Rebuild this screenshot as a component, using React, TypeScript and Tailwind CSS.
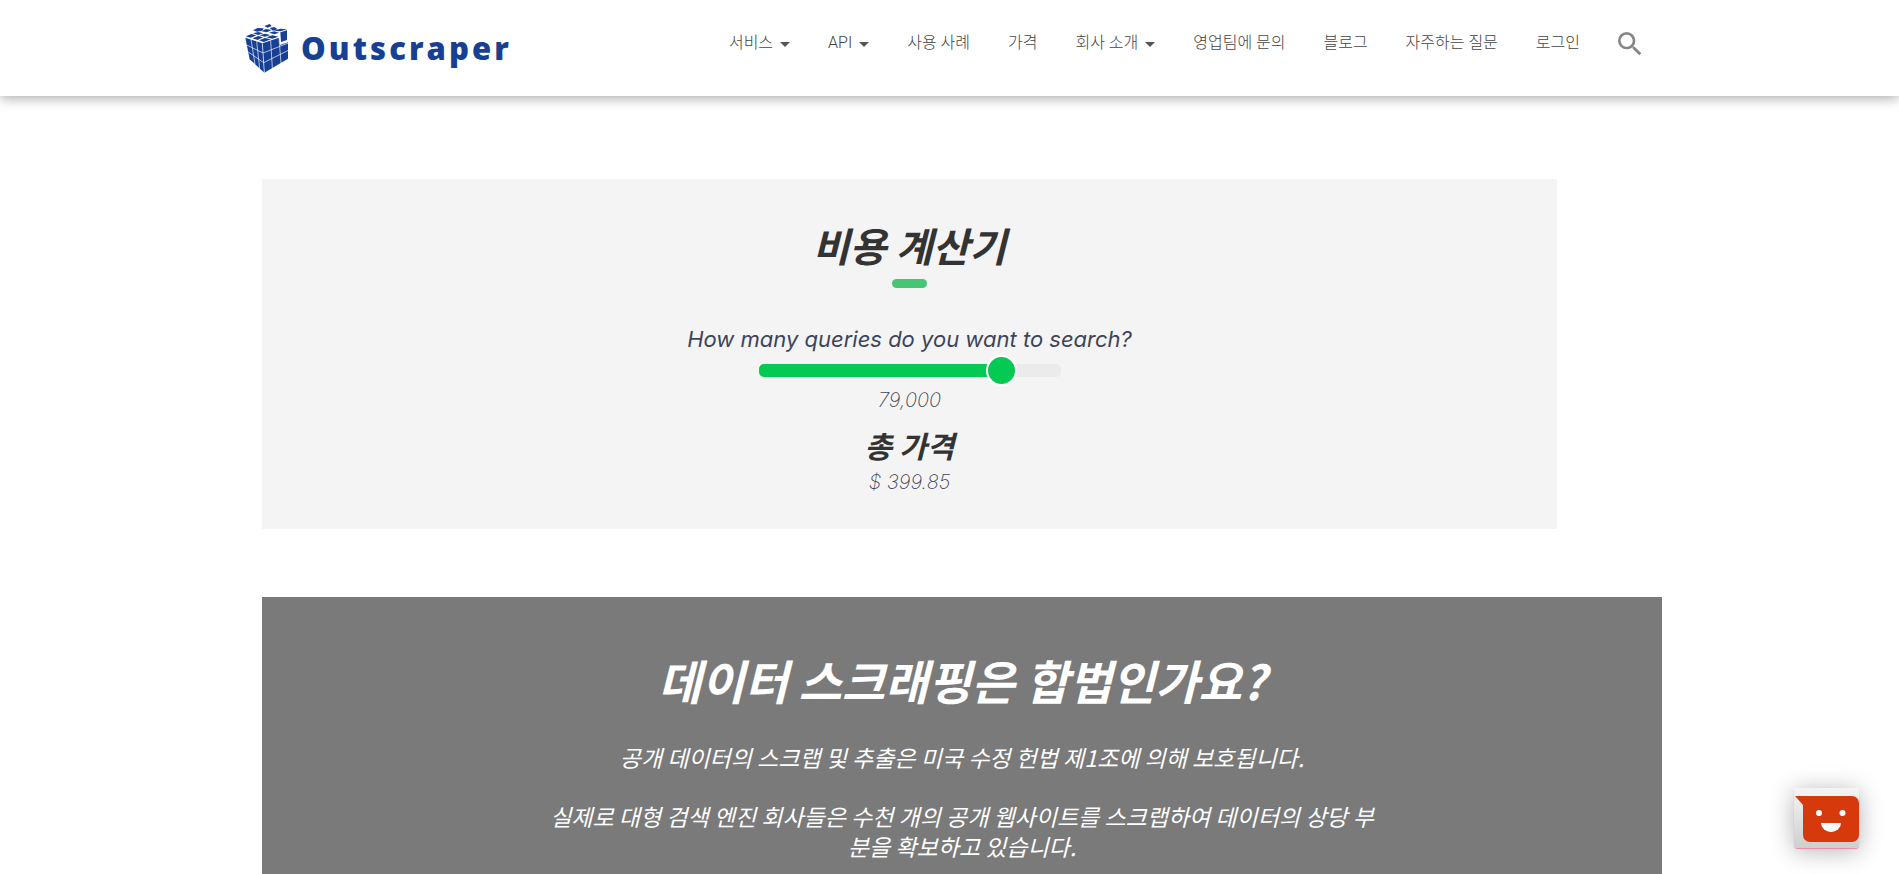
import { useState } from "react";
import { MdSearch } from "react-icons/md";

const navItems = [
  { label: "서비스", menu: true },
  { label: "API", menu: true },
  { label: "사용 사례" },
  { label: "가격" },
  { label: "회사 소개", menu: true },
  { label: "영업팀에 문의" },
  { label: "블로그" },
  { label: "자주하는 질문" },
  { label: "로그인" },
];

const MAX_QUERIES = 94000;
const BASE_FEE = 4.85;
const PRICE_PER_QUERY = 0.005;

function CubeLogo() {
  return (
    <svg viewBox="0 0 132 147" className="h-[49px] w-11" aria-hidden="true">
      <g fill="#173f93">
        <path d="M1 41 52 58 58 146 14 106Z" />
        <path d="M52 58 102 41 105 63 129 55 129 104 58 146Z" />
        <path d="M2 37 20 30 34 34 17 41ZM22 43 40 36 54 40 38 48ZM42 49 60 42 78 46 56 54ZM24 28 40 24 54 28 40 33ZM44 34 60 29 76 33 60 38ZM64 40 82 34 100 38 82 44Z" />
        <path d="M24 19 38 12 56 13 52 20 36 23ZM58 6 74 0 80 6 68 11ZM50 22 62 15 80 18 66 25ZM74 12 88 9 98 16 84 20ZM72 26 88 22 102 26 88 31Z" />
        <path d="M86 20 106 14 126 16 106 22ZM106 25 126 19 126 48 108 54Z" />
      </g>
      <path
        d="M18 46 30 121M35 52 44 134M52 58 58 146M5 63 54 87 130 57M10 84 56 116 130 79M77 50 82 132M102 41 108 117"
        fill="none"
        stroke="#fff"
        strokeWidth="2"
      />
    </svg>
  );
}

function Header() {
  return (
    <header className="relative bg-white shadow-[0_2px_12px_rgba(0,0,0,0.35)]">
      <div className="mx-auto flex h-24 max-w-[1409px] items-center justify-between pr-2">
        <a href="#" className="flex items-center gap-3">
          <CubeLogo />
          <span className="font-['Open_Sans',sans-serif] text-[31px] leading-10 font-extrabold tracking-widest text-[#173f93]">
            Outscraper
          </span>
        </a>
        <div className="flex items-center gap-[34px] pb-2.5">
          <nav className="flex items-center gap-[38px] font-['Roboto','Noto_Sans_CJK_KR',sans-serif] text-base font-light text-[#444]">
            {navItems.map((item) => (
              <a key={item.label} href="#" className="flex items-center gap-[7px] whitespace-nowrap">
                {item.label}
                {item.menu && (
                  <svg viewBox="0 0 10 5" className="mt-0.5 h-[5px] w-2.5" aria-hidden="true">
                    <path d="M0 0h10L5 5z" fill="#555" />
                  </svg>
                )}
              </a>
            ))}
          </nav>
          <button type="button" aria-label="검색" className="pt-0.5 text-[#858585]">
            <MdSearch className="size-8" />
          </button>
        </div>
      </div>
    </header>
  );
}

function Calculator() {
  const [queries, setQueries] = useState(79000);
  const fill = (queries / MAX_QUERIES) * 90 + 5;
  const price = queries * PRICE_PER_QUERY + BASE_FEE;

  return (
    <section className="flex max-w-[1295px] flex-col items-center bg-[#f4f4f4] pt-[43px] pb-8 font-['Inter','Noto_Sans_CJK_KR',sans-serif] italic text-[#3d4459]">
      <h2 className="text-[40px] leading-[52px] font-bold text-[#333]">비용 계산기</h2>
      <div className="mt-[5px] h-[9px] w-[35px] rounded-full bg-[#48c574]" />
      <label htmlFor="queries" className="mt-9 text-[22px] leading-[30px]">
        How many queries do you want to search?
      </label>
      <input
        id="queries"
        type="range"
        min={0}
        max={MAX_QUERIES}
        step={1000}
        value={queries}
        onChange={(e) => setQueries(Number(e.target.value))}
        className="mt-2.5 h-[13px] w-[302px] cursor-pointer appearance-none rounded-[5px] [&::-webkit-slider-thumb]:size-[31px] [&::-webkit-slider-thumb]:appearance-none [&::-webkit-slider-thumb]:rounded-full [&::-webkit-slider-thumb]:border-2 [&::-webkit-slider-thumb]:border-white [&::-webkit-slider-thumb]:bg-[#04ca53]"
        style={{ background: `linear-gradient(to right, #04ca53 ${fill}%, #ebebeb ${fill}%)` }}
      />
      <output htmlFor="queries" className="mt-2 text-xl leading-[30px] font-extralight">
        {queries.toLocaleString("en-US")}
      </output>
      <h3 className="mt-3 text-[30px] leading-10 font-bold text-[#333]">총 가격</h3>
      <p className="text-xl leading-[30px] font-extralight">$ {price.toFixed(2)}</p>
    </section>
  );
}

function Legality() {
  return (
    <section className="mt-[68px] flex flex-1 flex-col items-center bg-[#7a7a7a] px-6 pt-[53px] pb-3 text-center font-['Noto_Sans_CJK_KR',sans-serif] italic text-white">
      <h2 className="text-[47px] leading-[60px] font-bold">데이터 스크래핑은 합법인가요?</h2>
      <div className="mt-8 flex max-w-[840px] flex-col gap-[29px] text-[23px] leading-[30px]">
        <p>공개 데이터의 스크랩 및 추출은 미국 수정 헌법 제1조에 의해 보호됩니다.</p>
        <p>
          실제로 대형 검색 엔진 회사들은 수천 개의 공개 웹사이트를 스크랩하여 데이터의 상당 부분을 확보하고 있습니다.
        </p>
      </div>
    </section>
  );
}

function ChatButton() {
  return (
    <button
      type="button"
      aria-label="채팅 열기"
      className="fixed right-10 bottom-[26px] h-[60px] w-[65px] rounded bg-gradient-to-b from-[#f4f4f4] to-[#cfcfcf] shadow-[0_1px_1px_#e58aa8,0_3px_24px_rgba(0,0,0,0.3)]"
    >
      <svg viewBox="0 0 65 60" className="h-[60px] w-[65px]" aria-hidden="true">
        <path
          d="M1 8H58a7 7 0 0 1 7 7V47a7 7 0 0 1-7 7H16a7 7 0 0 1-7-7V17Z"
          fill="#d63a0c"
        />
        <circle cx="25" cy="25" r="3" fill="#fff" />
        <circle cx="48.500" cy="25" r="3" fill="#fff" />
        <path d="M27 35H47a10 9 0 0 1-20 0Z" fill="#fff" />
      </svg>
    </button>
  );
}

export default function App() {
  return (
    <div className="flex min-h-screen flex-col bg-white">
      <Header />
      <main className="mx-auto flex w-full max-w-[1425px] flex-1 flex-col pt-[83px] pl-[25px]">
        <Calculator />
        <Legality />
      </main>
      <ChatButton />
    </div>
  );
}
